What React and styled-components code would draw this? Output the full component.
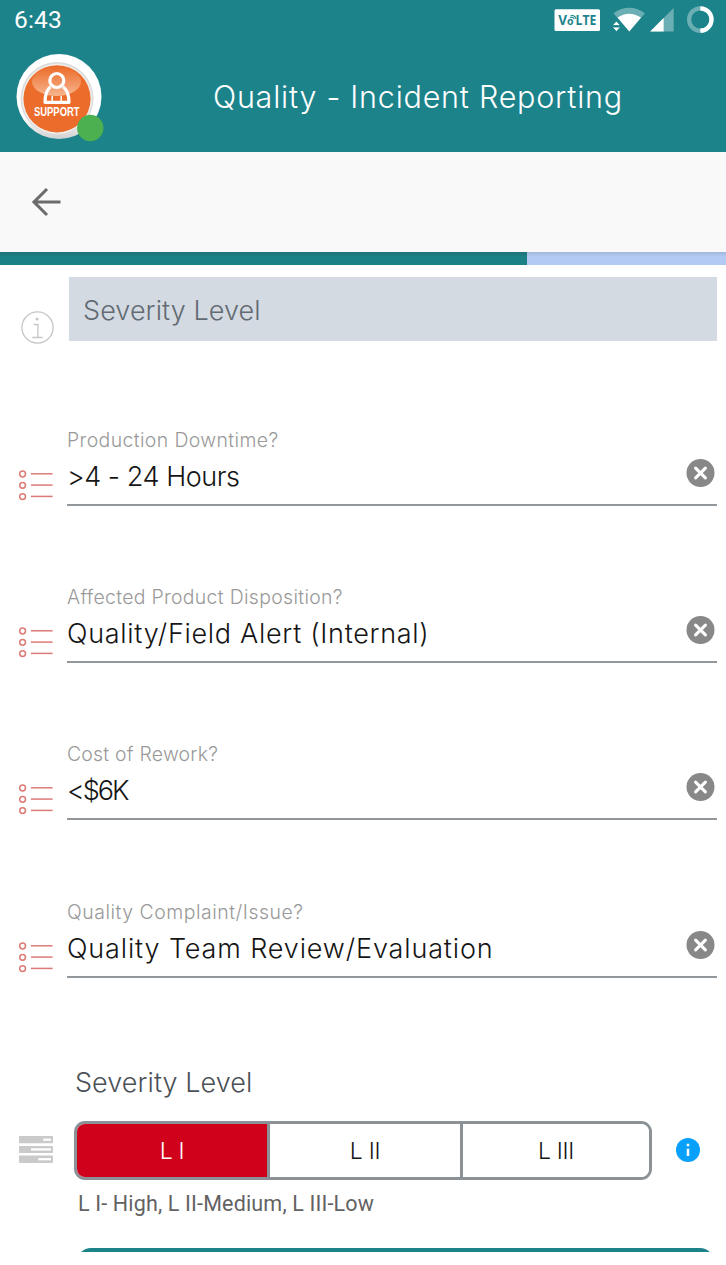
import React, { useState } from 'react';
import styled, { createGlobalStyle } from 'styled-components';

const GlobalStyle = createGlobalStyle`
  * {
    box-sizing: border-box;
  }
  body {
    margin: 0;
    background: #fff;
    font-family: Inter, 'Liberation Sans', sans-serif;
    font-weight: 300;
  }
`;

const Screen = styled('div')`
  width: 726px;
  height: 1265px;
  overflow: hidden;
  background: #fff;
`;

const Top = styled('div')`
  height: 152px;
  background: #1c838b;
  color: #fff;
`;
const StatusBar = styled('div')`
  display: flex;
  justify-content: space-between;
  height: 40px;
  padding: 0 0 0 14px;
`;
const Time = styled('span')`
  font: 400 24.5px/40px Roboto, sans-serif;
  letter-spacing: 0.2px;
`;
const Header = styled('header')`
  display: flex;
  align-items: center;
  height: 112px;
  padding: 0 90px 0 15px;
`;
const Avatar = styled('div')`
  width: 90px;
  height: 90px;
  margin-top: 3px;
  svg {
    display: block;
  }
`;
const Title = styled('h1')`
  flex: 1;
  margin: 2px 0 0 108px;
  font-size: 30.5px;
  line-height: 40px;
  font-weight: 300;
  letter-spacing: ${({ $spacing }) => $spacing}px;
  white-space: nowrap;
`;

const Toolbar = styled('nav')`
  display: flex;
  align-items: center;
  height: 100px;
  padding-left: 26px;
  background: #f9f9f9;
`;
const IconButton = styled('button')`
  display: flex;
  padding: 0;
  border: 0;
  background: none;
  cursor: pointer;
`;
const Progress = styled('div')`
  height: 13px;
  background: linear-gradient(#a3b8de, #b3cbf4 5px);
`;
const ProgressBar = styled('div')`
  width: ${({ $value }) => $value}px;
  height: 13px;
  background: linear-gradient(#1e7377, #1c8187 5px);
`;

const Section = styled('section')`
  display: flex;
  padding: 12px 9px 0 21px;
  margin-bottom: 87px;
`;
const SectionIcon = styled('div')`
  width: 48px;
  padding-top: 34px;
  height: 64px;
`;
const SectionTitle = styled('h2')`
  flex: 1;
  height: 64px;
  margin: 0;
  padding-left: 14px;
  background: #d4dae2;
  color: #626a73;
  font-size: 27px;
  font-weight: 300;
  line-height: 67px;
  letter-spacing: ${({ $spacing }) => $spacing}px;
`;

const FieldRow = styled('div')`
  display: flex;
  height: 78px;
  margin-bottom: 79.2px;
  padding: 0 9px 0 18px;
`;
const FieldIcon = styled('div')`
  width: 49px;
  padding-top: 41px;
`;
const Control = styled('div')`
  flex: 1;
  border-bottom: 2px solid #92979c;
`;
const Label = styled('div')`
  height: 24px;
  color: #999;
  font-size: 19.4px;
  line-height: 25px;
  letter-spacing: ${({ $spacing }) => $spacing}px;
`;
const ValueRow = styled('div')`
  display: flex;
  justify-content: space-between;
  height: 36px;
  margin-top: 7px;
  padding-right: 2px;
`;
const Value = styled('div')`
  color: #151515;
  font-size: 27px;
  line-height: 36px;
  letter-spacing: ${({ $spacing }) => $spacing}px;
`;
const ClearButton = styled(IconButton)`
  height: 29px;
`;

const Severity = styled('section')`
  display: flex;
  padding: 9px 0 0 18px;
`;
const SeverityIcon = styled('div')`
  width: 56px;
  padding-top: 69px;
`;
const SeverityBody = styled('div')`
  width: 578px;
`;
const SeverityTitle = styled('div')`
  height: 34px;
  margin-bottom: 21px;
  padding-left: 1px;
  color: #4b5157;
  font-size: 27px;
  line-height: 34px;
  letter-spacing: ${({ $spacing }) => $spacing}px;
`;
const Segments = styled('div')`
  display: flex;
  height: 59px;
  border: 3px solid #8a9298;
  border-radius: 11px;
  overflow: hidden;
`;
const Segment = styled('button')`
  flex: none;
  width: ${({ $width }) => $width}px;
  padding: 0;
  border: 0;
  background: ${({ $active }) => ($active ? '#d0021b' : '#fff')};
  color: ${({ $active }) => ($active ? '#fff' : '#151515')};
  font: 300 23px/54px Inter, sans-serif;
  letter-spacing: -0.3px;
  cursor: pointer;
  & + & {
    border-left: 3px solid #8a9298;
  }
`;
const Help = styled('div')`
  padding: 8px 0 0 4px;
  color: #626262;
  font: 400 21.5px/32px Roboto, sans-serif;
  letter-spacing: ${({ $spacing }) => $spacing}px;
`;
const SeverityInfo = styled('div')`
  padding: 72px 0 0 24px;
`;

// only the top edge of the next button is scrolled into view
const NextPeek = styled('div')`
  height: 4px;
  margin: 28px 12px 0 77px;
  overflow: hidden;
`;
const NextButton = styled('div')`
  height: 60px;
  border-radius: 14px;
  background: #1c838b;
`;

const StatusIcons = () => (
  <svg width="186" height="40" viewBox="540 0 186 40">
    <rect x="554.5" y="9.3" width="45.5" height="21.8" rx="1.5" fill="#fff" />
    <g fill="#1c838b" fontFamily="Open Sans, sans-serif" fontWeight="700">
      <text x="558.3" y="25.2" fontSize="13.5">V</text>
      <text x="567" y="25.2" fontSize="10.5">o</text>
      <text x="575.6" y="25.2" fontSize="13.5" textLength="20.7" lengthAdjust="spacingAndGlyphs">LTE</text>
    </g>
    <path
      d="M570 17.8q2.6-1.6 4.2 1.4M570.6 15.8q4.4-1.2 5.4 3"
      fill="none"
      stroke="#1c838b"
      strokeWidth="1.1"
    />
    <path d="M613.5 13.2Q629 2.5 645 13.2L629.3 31.5Z" fill="#fff" opacity=".35" />
    <path d="M617.5 17.6Q629 9.8 641 17.6L629.3 31.5Z" fill="#fff" />
    <path d="M612.2 25.6l4.2-4.6 4.2 4.6zM612.2 27l4.2 4.6 4.2-4.6z" fill="#fff" stroke="#1c838b" strokeWidth=".9" />
    <path d="M673.7 8v23.5H650.2z" fill="#fff" opacity=".35" />
    <path d="M663.6 18.1v13.4h-13.4z" fill="#fff" />
    <circle cx="700.3" cy="19.5" r="11.2" fill="none" stroke="#fff" strokeOpacity=".35" strokeWidth="4.3" />
    <path d="M700.3 8.3a11.2 11.2 0 0 1 0 22.4" fill="none" stroke="#fff" strokeWidth="4.3" />
  </svg>
);

const SupportBadge = () => (
  <svg width="90" height="90" viewBox="15 53 90 90">
    <defs>
      <linearGradient id="rim" x1="0" y1="0" x2="0" y2="1">
        <stop offset="0.75" stopColor="#fff" />
        <stop offset="1" stopColor="#cfcfcf" />
      </linearGradient>
      <linearGradient id="gloss" x1="0" y1="0" x2="0" y2="1">
        <stop offset="0" stopColor="#ec6d2b" />
        <stop offset="1" stopColor="#f7b58f" />
      </linearGradient>
    </defs>
    <circle cx="59" cy="96.5" r="42.5" fill="url(#rim)" />
    <circle cx="57" cy="98.5" r="36.5" fill="#dcdcdc" />
    <circle cx="57" cy="98.8" r="35" fill="#f1eeec" />
    <circle cx="57" cy="98.8" r="33.6" fill="#ec6d2b" />
    <ellipse cx="56.5" cy="81.5" rx="24.5" ry="14.5" fill="url(#gloss)" />
    <g fill="none" stroke="#fff" strokeWidth="3.2" strokeLinejoin="round">
      <circle cx="56.8" cy="80.5" r="7" />
      <path d="M50.5 86.7Q45 91 45 102.3H69Q69 91 63 86.7" />
      <path d="M52.2 102v-6M61.2 102v-6" strokeWidth="1.5" />
    </g>
    <text
      x="34"
      y="115.8"
      textLength="45.5"
      lengthAdjust="spacingAndGlyphs"
      fill="#fff"
      fontFamily="Liberation Sans, sans-serif"
      fontSize="13"
      fontWeight="700"
    >
      SUPPORT
    </text>
    <circle cx="90.3" cy="128" r="13.2" fill="#4caf50" />
  </svg>
);

const BackIcon = () => (
  <svg width="40" height="40" viewBox="26 182 40 40">
    <path d="M60.5 202H34.5M47 189L34 202L47 215" fill="none" stroke="#6c6c6c" strokeWidth="3.1" />
  </svg>
);

const OutlineInfoIcon = () => (
  <svg width="33" height="34" viewBox="0 0 33 34">
    <g fill="none" stroke="#c6c6c6" strokeWidth="1.3">
      <circle cx="16.5" cy="16.5" r="15.6" />
      <path d="M12.7 13.5h4.2V26.3M11.3 26.5h10.3" />
    </g>
    <circle cx="16" cy="8" r="1.5" fill="#c6c6c6" />
  </svg>
);

const ListIcon = () => (
  <svg width="36" height="34" viewBox="0 0 36 34">
    {[5, 16.3, 27.6].map((y) => (
      <g key={y} fill="none" stroke="#dc7b75" strokeWidth="1.5">
        <circle cx="4.6" cy={y} r="2.9" />
        <path d={`M12.9 ${y - 0.2}H34.6`} />
      </g>
    ))}
  </svg>
);

const ClearIcon = () => (
  <svg width="29" height="29" viewBox="0 0 29 29">
    <circle cx="14.5" cy="14" r="14" fill="#888" />
    <path d="M9.6 9.1l9.8 9.8M19.4 9.1l-9.8 9.8" stroke="#fff" strokeWidth="3.1" strokeLinecap="round" />
  </svg>
);

const BarsIcon = () => (
  <svg width="36" height="29" viewBox="0 0 36 29">
    <g fill="#cacaca">
      <rect x="1" y="1" width="34" height="7.3" rx="0.8" />
      <rect x="1" y="11" width="34" height="7" rx="0.8" />
      <rect x="1" y="20.6" width="34" height="7.3" rx="0.8" />
    </g>
    <g fill="#fff">
      <rect x="25.3" y="3.6" width="7.7" height="2.2" />
      <rect x="13" y="13.3" width="20" height="2.2" />
      <rect x="20.3" y="23.1" width="12.7" height="2.2" />
    </g>
  </svg>
);

const InfoIcon = () => (
  <svg width="24" height="24" viewBox="0 0 24 24">
    <circle cx="12" cy="12" r="12" fill="#08a0fa" />
    <path d="M12 5.8v2.5M12 10.7v7.2" stroke="#fff" strokeWidth="2.5" />
  </svg>
);

const fields = [
  { label: 'Production Downtime?', value: '>4 - 24 Hours', labelSpacing: 0.41, spacing: -0.45 },
  { label: 'Affected Product Disposition?', value: 'Quality/Field Alert (Internal)', labelSpacing: 0.34, spacing: 0.7 },
  { label: 'Cost of Rework?', value: '<$6K', labelSpacing: 0.25, spacing: -2 },
  { label: 'Quality Complaint/Issue?', value: 'Quality Team Review/Evaluation', labelSpacing: 0.54, spacing: 0.86 },
];

const levels = [
  { name: 'L I', width: 190 },
  { name: 'L II', width: 193 },
  { name: 'L III', width: 189 },
];

const Field = ({ field }) => (
  <FieldRow>
    <FieldIcon>
      <ListIcon />
    </FieldIcon>
    <Control>
      <Label $spacing={field.labelSpacing}>{field.label}</Label>
      <ValueRow>
        <Value $spacing={field.spacing}>{field.value}</Value>
        <ClearButton aria-label="Clear">
          <ClearIcon />
        </ClearButton>
      </ValueRow>
    </Control>
  </FieldRow>
);

const App = () => {
  const [level, setLevel] = useState('L I');

  return (
    <Screen>
      <GlobalStyle />
      <Top>
        <StatusBar>
          <Time>6:43</Time>
          <StatusIcons />
        </StatusBar>
        <Header>
          <Avatar>
            <SupportBadge />
          </Avatar>
          <Title $spacing={0.76}>Quality - Incident Reporting</Title>
        </Header>
      </Top>
      <Toolbar>
        <IconButton aria-label="Back">
          <BackIcon />
        </IconButton>
      </Toolbar>
      <Progress>
        <ProgressBar $value={527} />
      </Progress>
      <Section>
        <SectionIcon>
          <OutlineInfoIcon />
        </SectionIcon>
        <SectionTitle $spacing={0.07}>Severity Level</SectionTitle>
      </Section>
      {fields.map((field) => (
        <Field key={field.label} field={field} />
      ))}
      <Severity>
        <SeverityIcon>
          <BarsIcon />
        </SeverityIcon>
        <SeverityBody>
          <SeverityTitle $spacing={0.05}>Severity Level</SeverityTitle>
          <Segments>
            {levels.map(({ name, width }) => (
              <Segment key={name} $width={width} $active={name === level} onClick={() => setLevel(name)}>
                {name}
              </Segment>
            ))}
          </Segments>
          <Help $spacing={0.16}>L I- High, L II-Medium, L III-Low</Help>
        </SeverityBody>
        <SeverityInfo>
          <InfoIcon />
        </SeverityInfo>
      </Severity>
      <NextPeek>
        <NextButton />
      </NextPeek>
    </Screen>
  );
};

export default App;
